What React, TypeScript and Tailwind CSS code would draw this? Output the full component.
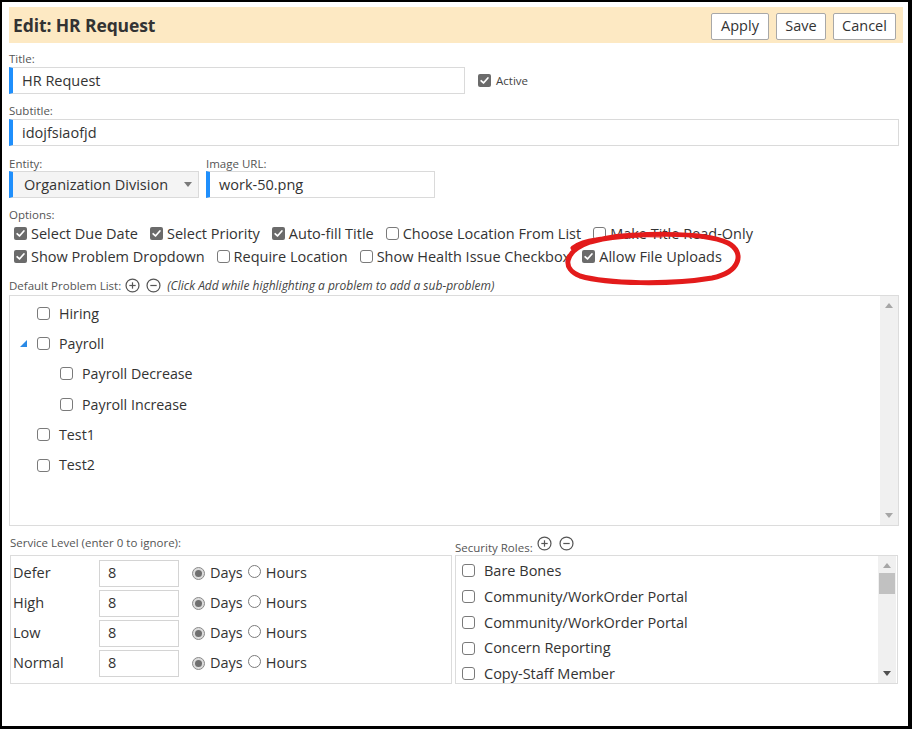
import React from "react";

const Check = ({ checked }: { checked?: boolean }) =>
  checked ? (
    <span className="inline-flex shrink-0 items-center justify-center w-[13px] h-[13px] rounded-[2px] bg-[#6b6b6b]">
      <svg viewBox="0 0 12 12" className="w-[11px] h-[11px]">
        <path d="M2.4 6.3 L4.9 8.7 L9.7 3.3" stroke="white" strokeWidth="1.9" fill="none" strokeLinecap="round" strokeLinejoin="round" />
      </svg>
    </span>
  ) : (
    <span className="inline-block shrink-0 w-[13px] h-[13px] rounded-[3px] border border-[#7a7a7a] bg-white" />
  );

const Radio = ({ checked }: { checked?: boolean }) =>
  checked ? (
    <span className="inline-flex shrink-0 items-center justify-center w-[13px] h-[13px] rounded-full border border-[#8a8a8a] bg-[#dcdcdc]">
      <span className="w-[7px] h-[7px] rounded-full bg-[#6f6f6f]" />
    </span>
  ) : (
    <span className="inline-block shrink-0 w-[13px] h-[13px] rounded-full border border-[#7a7a7a] bg-white" />
  );

const CircleIcon = ({ plus }: { plus?: boolean }) => (
  <svg viewBox="0 0 16 16" className="w-[15px] h-[15px] shrink-0">
    <circle cx="8" cy="8" r="6.9" stroke="#555" strokeWidth="1.3" fill="none" />
    <path d="M4.6 8 H11.4" stroke="#555" strokeWidth="1.3" />
    {plus && <path d="M8 4.6 V11.4" stroke="#555" strokeWidth="1.3" />}
  </svg>
);

const Label = ({ children, className = "" }: { children: React.ReactNode; className?: string }) => (
  <div className={"text-[11.5px] leading-[14px] text-[#555] " + className}>{children}</div>
);

const Opt = ({ checked, label }: { checked?: boolean; label: string }) => (
  <span className="inline-flex items-center gap-[4px] whitespace-nowrap">
    <Check checked={checked} />
    <span>{label}</span>
  </span>
);

const Up = ({ color = "#a6a6a6" }: { color?: string }) => (
  <svg viewBox="0 0 8 5" className="w-[8px] h-[5px]">
    <path d="M0 5 L4 0 L8 5 Z" fill={color} />
  </svg>
);
const Down = ({ color = "#a6a6a6" }: { color?: string }) => (
  <svg viewBox="0 0 8 5" className="w-[8px] h-[5px]">
    <path d="M0 0 L8 0 L4 5 Z" fill={color} />
  </svg>
);

const TreeRow = ({ label, level = 0, expander }: { label: string; level?: number; expander?: boolean }) => (
  <div className="h-[30.4px] flex items-center">
    <span className="w-[27px] flex justify-center shrink-0">
      {expander && (
        <svg viewBox="0 0 7 7" className="w-[7px] h-[7px]">
          <path d="M7 0 L7 7 L0 7 Z" fill="#2a8ae6" />
        </svg>
      )}
    </span>
    <span className={level ? "w-[23px] shrink-0" : "w-0"} />
    <Check />
    <span className="ml-[9px]">{label}</span>
  </div>
);

const SvcRow = ({ label }: { label: string }) => (
  <div className="h-[30px] flex items-center">
    <span className="w-[88px] pl-[2px]">{label}</span>
    <span className="w-[80px] h-[27px] border border-[#d4d4d4] flex items-center pl-[8px]">8</span>
    <span className="ml-[13px] flex items-center">
      <Radio checked />
      <span className="ml-[5px]">Days</span>
      <span className="ml-[5px]"><Radio /></span>
      <span className="ml-[5px]">Hours</span>
    </span>
  </div>
);

export default function App() {
  const roles = [
    "Bare Bones",
    "Community/WorkOrder Portal",
    "Community/WorkOrder Portal",
    "Concern Reporting",
    "Copy-Staff Member",
  ];
  return (
    <div className="relative w-[912px] h-[729px] bg-white border-l-2 border-t-2 border-r-[4px] border-b-[3px] border-black overflow-hidden pl-[7px] pr-[5px] pt-[5px] text-[#333] font-['Open_Sans',sans-serif]">
      {/* header */}
      <div className="h-[36px] bg-[#fde9c3] flex items-center justify-between pl-[4px] pr-[7px]">
        <div className="text-[17.5px] font-bold text-[#333] tracking-[-0.1px]">Edit: HR Request</div>
        <div className="flex gap-[7px] text-[14.5px] mt-[2px]">
          <button className="w-[58px] h-[27px] bg-white border border-[#a8a8a8] rounded-[2px] text-[#333]">Apply</button>
          <button className="w-[50px] h-[27px] bg-white border border-[#a8a8a8] rounded-[2px] text-[#333]">Save</button>
          <button className="w-[63px] h-[27px] bg-white border border-[#a8a8a8] rounded-[2px] text-[#333]">Cancel</button>
        </div>
      </div>

      {/* Title */}
      <Label className="mt-[9px] mb-[1px]">Title:</Label>
      <div className="flex items-start">
        <div className="w-[456px] h-[27px] border border-[#dadada] border-l-[4px] border-l-[#1f8ffc] flex items-center pl-[9px] pt-[1px] text-[14.5px]">
          HR Request
        </div>
        <div className="ml-[13px] mt-[5px] flex items-center gap-[5px]">
          <Check checked />
          <span className="text-[11.5px] text-[#444]">Active</span>
        </div>
      </div>

      {/* Subtitle */}
      <Label className="mt-[10px] mb-[1px]">Subtitle:</Label>
      <div className="w-[890px] h-[27px] border border-[#dadada] border-l-[4px] border-l-[#1f8ffc] flex items-center pl-[9px] pt-[1px] text-[14.5px]">
        idojfsiaofjd
      </div>

      {/* Entity / Image */}
      <div className="flex mt-[11px]">
        <div className="w-[190px]">
          <Label>Entity:</Label>
          <div className="h-[27px] border border-[#dadada] border-l-[4px] border-l-[#1f8ffc] bg-[#f4f4f4] flex items-center justify-between pl-[11px] pr-[6px] text-[14.5px]">
            <span>Organization Division</span>
            <svg viewBox="0 0 8 5" className="w-[8px] h-[5px]">
              <path d="M0 0 L8 0 L4 5 Z" fill="#7a7a7a" />
            </svg>
          </div>
        </div>
        <div className="w-[229px] ml-[7px]">
          <Label>Image URL:</Label>
          <div className="h-[27px] border border-[#dadada] border-l-[4px] border-l-[#1f8ffc] flex items-center pl-[9px] text-[14.5px]">
            work-50.png
          </div>
        </div>
      </div>

      {/* Options */}
      <Label className="mt-[10px]">Options:</Label>
      <div className="pl-[5px] text-[14.5px] text-[#333]">
        <div className="h-[23px] flex items-center gap-[12px]">
          <Opt checked label="Select Due Date" />
          <Opt checked label="Select Priority" />
          <Opt checked label="Auto-fill Title" />
          <Opt label="Choose Location From List" />
          <Opt label="Make Title Read-Only" />
        </div>
        <div className="h-[23px] flex items-center gap-[12px]">
          <Opt checked label="Show Problem Dropdown" />
          <Opt label="Require Location" />
          <Opt label="Show Health Issue Checkbox" />
          <Opt checked label="Allow File Uploads" />
        </div>
      </div>

      {/* Default problem list */}
      <div className="h-[27px] flex items-center pt-[8px]">
        <span className="text-[11.5px] text-[#555]">Default Problem List:</span>
        <span className="ml-[4px] flex gap-[6px]">
          <CircleIcon plus />
          <CircleIcon />
        </span>
        <span className="ml-[6px] text-[12px] italic text-[#444]">(Click Add while highlighting a problem to add a sub-problem)</span>
      </div>
      <div className="w-[890px] h-[231px] border border-[#dcdcdc] flex text-[14.25px]">
        <div className="flex-1 pt-[2px]">
          <TreeRow label="Hiring" />
          <TreeRow label="Payroll" expander />
          <TreeRow label="Payroll Decrease" level={1} />
          <TreeRow label="Payroll Increase" level={1} />
          <TreeRow label="Test1" />
          <TreeRow label="Test2" />
        </div>
        <div className="w-[18px] bg-[#f0f0f0] flex flex-col items-center justify-between py-[7px]">
          <Up />
          <Down />
        </div>
      </div>

      {/* bottom */}
      <div className="flex">
        <div className="w-[442px] ml-[1px]">
          <Label className="mt-[10px] mb-[5px]">Service Level (enter 0 to ignore):</Label>
          <div className="h-[129px] border border-[#dcdcdc] pt-[2px] text-[14.5px]">
            <SvcRow label="Defer" />
            <SvcRow label="High" />
            <SvcRow label="Low" />
            <SvcRow label="Normal" />
          </div>
        </div>
        <div className="w-[443px] ml-[3px]">
          <div className="h-[29px] flex items-end">
            <span className="text-[11.5px] leading-[14px] text-[#555]">Security Roles:</span>
            <span className="ml-[4px] mb-[4px] flex gap-[7px]">
              <CircleIcon plus />
              <CircleIcon />
            </span>
          </div>
          <div className="h-[129px] border border-[#dcdcdc] flex overflow-hidden text-[14.5px]">
            <div className="flex-1 pt-[2px] pl-[6px]">
              {roles.map((r, i) => (
                <div key={i} className="h-[25.75px] flex items-center">
                  <Check />
                  <span className="ml-[9px] whitespace-nowrap">{r}</span>
                </div>
              ))}
            </div>
            <div className="w-[18px] bg-[#f0f0f0] flex flex-col items-center py-[7px] mr-[1px]">
              <Up />
              <div className="w-[16px] h-[21px] bg-[#c1c1c1] mt-[5px]" />
              <div className="flex-1" />
              <Down color="#505050" />
            </div>
          </div>
        </div>
      </div>

      {/* red hand-drawn highlight */}
      <svg className="absolute -left-[2px] -top-[2px] w-[912px] h-[729px] pointer-events-none" viewBox="0 0 912 729">
        <path
          d="M 573 248 C 580 243, 588 241, 596 240 C 636 233, 702 231, 728 243 C 745 252, 741 272, 712 278 C 670 285, 607 284, 580 276 C 562 269, 563 252, 590 242 C 613 235, 640 234, 662 235"
          stroke="#e31b1b"
          strokeWidth="5"
          fill="none"
          strokeLinecap="round"
          strokeLinejoin="round"
        />
      </svg>
    </div>
  );
}
